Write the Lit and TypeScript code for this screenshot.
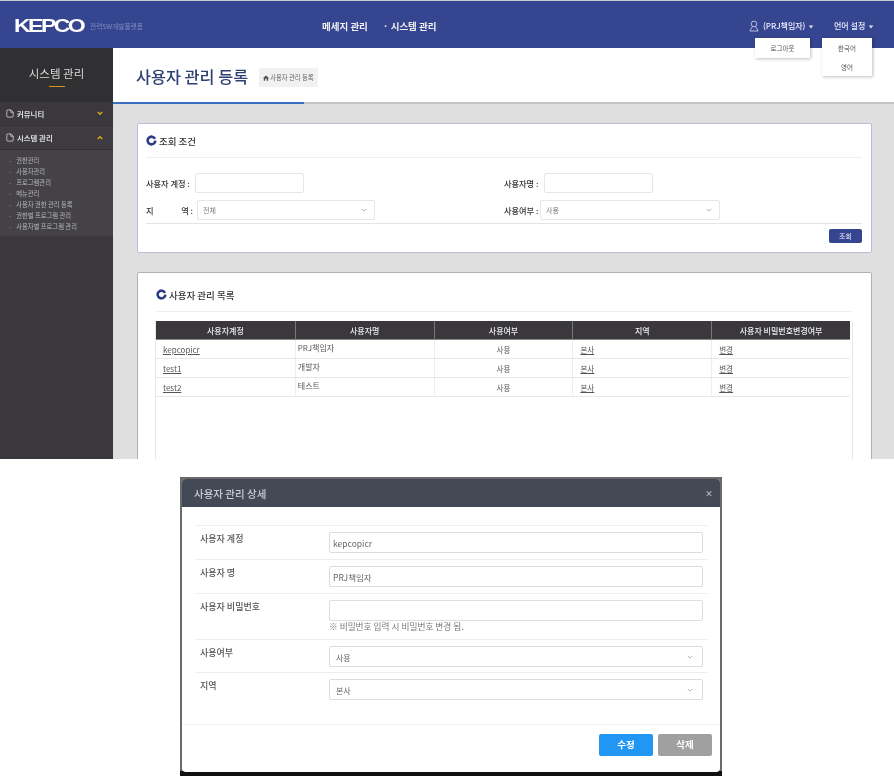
import { LitElement, html, css, svg } from 'lit';
import { customElement } from 'lit/decorators.js';

const SIDE_LINKS = ['권한관리', '사용자관리', '프로그램관리', '메뉴관리', '사용자 권한 관리 등록', '권한별 프로그램 관리', '사용자별 프로그램 관리'];
const USERS = [
  { id: 'kepcopicr', name: 'PRJ책임자' },
  { id: 'test1', name: '개발자' },
  { id: 'test2', name: '테스트' },
];

const docIcon = html`<svg class="doc" viewBox="0 0 10 11" width="8" height="9" fill="none" stroke="#d4d4d4" stroke-width="1"><path d="M1 2.2Q1 1 2.2 1H6.2L9 3.8V8.8Q9 10 7.8 10H2.2Q1 10 1 8.8Z"/><path d="M6 1V4H9"/></svg>`;
const chevron = (up: boolean) => html`<svg viewBox="0 0 8 6" width="6" height="5" fill="none" stroke="#d9a514" stroke-width="2"><path d=${up ? 'M1 5L4 2L7 5' : 'M1 1L4 4L7 1'}/></svg>`;
const ring = html`<svg class="ring" viewBox="0 0 12 12" width="11" height="11" fill="none"><path d="M9.81 4.22A4.2 4.2 0 1 0 10.2 6.15" stroke="#2a3a85" stroke-width="2.8"/></svg>`;
const caret = svg`<path d="M1 2L7 2L4 6Z" fill="#dfe3f2"/>`;
const selectArrow = html`<svg class="arrow" viewBox="0 0 8 5" width="6" height="4" fill="none" stroke="#999" stroke-width="1"><path d="M1 1L4 4L7 1"/></svg>`;

@customElement('app-root')
export class AppRoot extends LitElement {
  static styles = css`
    :host {
      display: block;
      width: 894px;
      height: 776px;
      background: #fff;
      overflow: hidden;
      font-family: 'Noto Sans CJK KR', 'Noto Sans', sans-serif;
      color: #333;
      filter: blur(0.35px);
    }
    a { color: inherit; }

    .shot {
      position: relative;
      height: 459px;
      overflow: hidden;
      display: flex;
      flex-direction: column;
      border-top: 1px solid #c9c9c9;
      box-sizing: border-box;
    }
    .top {
      height: 47px;
      flex: none;
      box-sizing: border-box;
      padding-top: 2px;
      background: #36458f;
      display: flex;
      align-items: center;
      color: #fff;
    }
    .logo {
      margin-left: 14px;
      width: 71px;
      font: 700 18px/20px 'Liberation Sans', sans-serif;
      letter-spacing: -2px;
      white-space: nowrap;
      transform: scaleX(1.28);
      transform-origin: left center;
    }
    .sub { margin-left: 5px; width: 60px; font-size: 6.7px; color: #7f8cc4; white-space: nowrap; }
    .gnb { margin-left: 172px; display: flex; gap: 15px; font-size: 9.5px; font-weight: 700; color: #f0f0f5; }
    .right { margin-left: auto; display: flex; align-items: center; font-size: 8px; font-weight: 500; color: #eef; }
    .user { display: flex; align-items: center; gap: 4px; width: 85px; }
    .lang { width: 60px; }
    .right svg.tri { vertical-align: middle; margin-left: 3px; }

    .menu {
      position: absolute;
      top: 37px;
      background: #fff;
      box-shadow: 1px 1px 3px rgba(0, 0, 0, 0.25);
      font-size: 6.5px;
      color: #555;
      text-align: center;
    }
    .menu.logout { left: 755px; width: 55px; height: 20px; line-height: 20px; }
    .menu.langs { left: 822px; width: 50px; height: 38px; padding-top: 1px; box-sizing: border-box; }
    .menu.langs div { height: 19px; line-height: 18px; }

    .body { flex: 1; display: flex; min-height: 0; }
    .side { width: 113px; flex: none; background: #3a383c; color: #ddd; }
    .side-title {
      height: 54px;
      background: #302f32;
      box-sizing: border-box;
      padding-top: 16px;
      text-align: center;
      font-size: 11.5px;
      line-height: 18px;
      color: #d8d8d8;
    }
    .side-title i { display: block; width: 16px; height: 1px; margin: 4px auto 0; background: #d9951a; }
    .side-item {
      height: 24px;
      display: flex;
      align-items: center;
      padding: 0 10px 0 6px;
      gap: 3px;
      font-size: 7.4px;
      font-weight: 700;
      color: #dcdcdc;
      background: #3a383c;
      border-bottom: 1px solid #333135;
      box-sizing: border-box;
    }
    .side-item.open { background: #3e3c40; }
    .side-item span { flex: 1; }
    .side-links {
      list-style: none;
      margin: 0;
      padding: 5px 0 4px 9px;
      background: #444246;
      font-size: 6.3px;
      line-height: 11px;
      color: #b4b4b4;
    }
    .side-links li::before { content: '-'; margin-right: 5px; color: #888; }

    .main { flex: 1; background: #dfdfdf; min-width: 0; }
    .head {
      height: 54px;
      background: #fff;
      box-sizing: border-box;
      padding: 5px 0 0 23px;
      display: flex;
      align-items: center;
      gap: 11px;
    }
    .head h1 { margin: -3px 0 0; font-size: 16.3px; font-weight: 500; color: #2f4072; }
    .crumb {
      height: 19px;
      padding: 0 4px;
      display: flex;
      align-items: center;
      gap: 1px;
      background: #f1f1f1;
      font-size: 6.3px;
      color: #666;
    }
    .rule { height: 2px; background: linear-gradient(to right, #3a6fc0 191px, #c4c4c4 191px); }
    .card {
      margin: 19px 22px 0 24px;
      background: #fff;
      border-radius: 2px;
      box-sizing: border-box;
    }
    .search { height: 130px; border: 1px solid #b9bdd8; padding: 0 9px 0 8px; }
    .list { height: 240px; border: 1px solid #b0b0b0; padding: 0 19px 0 18px; margin-top: 19px; }
    .card h2 {
      margin: 0;
      display: flex;
      align-items: center;
      gap: 2px;
      font-size: 9.5px;
      font-weight: 500;
      color: #333;
      border-bottom: 1px solid #eee;
    }
    .search h2 { height: 33px; padding-top: 0; }
    .list h2 { height: 39px; padding-top: 5px; box-sizing: border-box; }

    .form {
      display: grid;
      grid-template-columns: 358px 1fr;
      row-gap: 7px;
      padding-top: 15px;
      border-bottom: 1px solid #e4e4e4;
      padding-bottom: 3px;
    }
    .field { display: flex; align-items: center; gap: 4px; font-size: 8.2px; font-weight: 500; color: #333; }
    .field label { white-space: nowrap; }
    .l45 { width: 45px; }
    .l36 { width: 36px; }
    .spread { display: flex; justify-content: space-between; width: 47px; }
    .input {
      height: 20px;
      box-sizing: border-box;
      background: #fff;
      border: 1px solid #e6e6e6;
      border-radius: 2px;
      display: flex;
      align-items: center;
      justify-content: space-between;
      padding: 0 7px 0 5px;
      font-size: 7px;
      font-weight: 400;
      color: #777;
    }
    .input.w109 { width: 109px; }
    .input.w178 { width: 178px; }
    .input.w180 { width: 180px; margin-left: -4px; }
    .actions { display: flex; justify-content: flex-end; padding-top: 5px; }
    .btn-search {
      width: 33px;
      height: 14px;
      background: #36458f;
      color: #e8e8f4;
      border-radius: 2px;
      font-size: 7px;
      line-height: 14px;
      text-align: center;
    }

    .table-wrap {
      margin: 9px 0 0 -1px;
      height: 160px;
      width: 698px;
      border-left: 1px solid #e6e6e6;
      border-right: 1px solid #e6e6e6;
      box-sizing: border-box;
    }
    table {
      width: 694px;
      border-collapse: separate;
      border-spacing: 0;
      table-layout: fixed;
      font-size: 8px;
    }
    th {
      height: 19px;
      padding: 0;
      background: #3a383c;
      color: #eee;
      font-weight: 500;
      border-left: 1px solid #777;
      border-bottom: 1px solid #888;
      box-sizing: border-box;
    }
    th:first-child { border-left: 0; }
    td {
      height: 19px;
      padding: 0 7px;
      color: #555;
      border-bottom: 1px solid #e8e8e8;
      border-left: 1px solid #eee;
      box-sizing: border-box;
      font-size: 7.5px;
    }
    td:first-child { border-left: 0; font-size: 8px; }
    td.name { padding: 0 2px 4px; font-size: 8px; }
    td.mid { text-align: center; }

    .modal-shot {
      margin: 18px 0 0 180px;
      width: 542px;
      height: 299px;
      box-sizing: border-box;
      padding: 2px 2px 4px;
      background: linear-gradient(to bottom, #6a6a6a 0, #6a6a6a 294px, #111 294px);
    }
    .modal {
      height: 293px;
      background: #fff;
      border-radius: 4px;
      overflow: hidden;
      display: flex;
      flex-direction: column;
    }
    .modal-head {
      height: 28px;
      flex: none;
      background: #434a56;
      display: flex;
      align-items: center;
      justify-content: space-between;
      padding: 0 7px 0 12px;
      color: #c9ccd2;
      font-size: 10.5px;
      font-weight: 500;
    }
    .modal-head b { font-size: 8px; color: #c4c4c4; }
    .rows {
      margin: 18px 12px 0 13px;
      border-top: 1px solid #eee;
      flex: 1;
    }
    .row {
      display: grid;
      grid-template-columns: 134px 374px;
      border-bottom: 1px solid #eee;
      padding: 6px 0;
      font-size: 9px;
      font-weight: 500;
      color: #555;
    }
    .row:nth-child(n + 4) { padding-bottom: 5px; }
    .row:last-child { border-bottom: 0; }
    .row label { padding-left: 5px; line-height: 13px; }
    .box {
      height: 21px;
      box-sizing: border-box;
      border: 1px solid #ddd;
      border-radius: 2px;
      display: flex;
      align-items: center;
      justify-content: space-between;
      padding: 1px 9px 0 3px;
      font-size: 8.5px;
      font-weight: 400;
      color: #666;
    }
    .box.sel { padding-left: 6px; font-size: 8px; }
    .note { font-size: 8.7px; font-weight: 400; color: #777; line-height: 12px; }
    .modal-foot {
      height: 48px;
      flex: none;
      border-top: 1px solid #f2f2f2;
      display: flex;
      justify-content: flex-end;
      gap: 5px;
      padding: 9px 8px 0 0;
      box-sizing: border-box;
    }
    .modal-foot div {
      width: 54px;
      height: 22px;
      border-radius: 2px;
      color: #fff;
      font-size: 9.5px;
      font-weight: 700;
      line-height: 21px;
      text-align: center;
    }
    .ok { background: #2196f3; }
    .del { background: #a0a0a0; }
  `;

  render() {
    return html`
      <div class="shot">
        <div class="top">
          <div class="logo">KEPCO</div>
          <div class="sub">전력SW개발플랫폼</div>
          <div class="gnb"><span>메세지 관리</span><span>· 시스템 관리</span></div>
          <div class="right">
            <div class="user">
              <svg viewBox="0 0 12 14" width="10" height="12" fill="none" stroke="#dfe3f2" stroke-width="0.9"><circle cx="6" cy="4.5" r="3.4"/><path d="M4.2 7.5L1 13H11L7.8 7.5"/></svg>
              <span>(PRJ책임자)<svg class="tri" viewBox="0 0 8 8" width="6" height="6">${caret}</svg></span>
            </div>
            <div class="lang">언어 설정<svg class="tri" viewBox="0 0 8 8" width="6" height="6">${caret}</svg></div>
          </div>
        </div>
        <div class="menu logout">로그아웃</div>
        <div class="menu langs"><div>한국어</div><div>영어</div></div>
        <div class="body">
          <aside class="side">
            <div class="side-title">시스템 관리<i></i></div>
            <div class="side-item">${docIcon}<span>커뮤니티</span>${chevron(false)}</div>
            <div class="side-item open">${docIcon}<span>시스템 관리</span>${chevron(true)}</div>
            <ul class="side-links">${SIDE_LINKS.map((l) => html`<li>${l}</li>`)}</ul>
          </aside>
          <main class="main">
            <div class="head">
              <h1>사용자 관리 등록</h1>
              <div class="crumb">
                <svg viewBox="0 0 8 8" width="6" height="6"><path d="M4 0.5L8 4H7V7.5H5V5H3V7.5H1V4H0Z" fill="#555"/></svg>
                사용자 관리 등록
              </div>
            </div>
            <div class="rule"></div>
            <section class="card search">
              <h2>${ring}조회 조건</h2>
              <div class="form">
                <div class="field"><label class="l45">사용자 계정 :</label><div class="input w109"></div></div>
                <div class="field"><label class="l36">사용자명 :</label><div class="input w109"></div></div>
                <div class="field">
                  <label class="spread"><span>지</span><span>역 :</span></label>
                  <div class="input w178">전체${selectArrow}</div>
                </div>
                <div class="field"><label class="l36">사용여부 :</label><div class="input w180">사용${selectArrow}</div></div>
              </div>
              <div class="actions"><div class="btn-search">조회</div></div>
            </section>
            <section class="card list">
              <h2>${ring}사용자 관리 목록</h2>
              <div class="table-wrap">
                <table>
                  <thead>
                    <tr><th>사용자계정</th><th>사용자명</th><th>사용여부</th><th>지역</th><th>사용자 비밀번호변경여부</th></tr>
                  </thead>
                  <tbody>
                    ${USERS.map((u) => html`
                      <tr>
                        <td><a href="#">${u.id}</a></td>
                        <td class="name">${u.name}</td>
                        <td class="mid">사용</td>
                        <td><a href="#">본사</a></td>
                        <td><a href="#">변경</a></td>
                      </tr>
                    `)}
                  </tbody>
                </table>
              </div>
            </section>
          </main>
        </div>
      </div>

      <div class="modal-shot">
        <div class="modal">
          <div class="modal-head"><span>사용자 관리 상세</span><b>×</b></div>
          <div class="rows">
            <div class="row"><label>사용자 계정</label><div class="box">kepcopicr</div></div>
            <div class="row"><label>사용자 명</label><div class="box">PRJ책임자</div></div>
            <div class="row">
              <label>사용자 비밀번호</label>
              <div><div class="box"></div><div class="note">※ 비밀번호 입력 시 비밀번호 변경 됨.</div></div>
            </div>
            <div class="row"><label>사용여부</label><div class="box sel">사용${selectArrow}</div></div>
            <div class="row"><label>지역</label><div class="box sel">본사${selectArrow}</div></div>
          </div>
          <div class="modal-foot"><div class="ok">수정</div><div class="del">삭제</div></div>
        </div>
      </div>
    `;
  }
}
